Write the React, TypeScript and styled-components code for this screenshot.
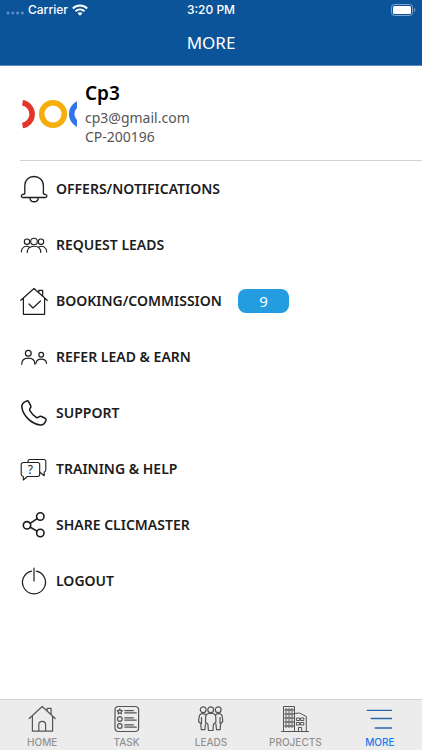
import React from "react";
import styled, { createGlobalStyle } from "styled-components";

const GlobalStyle = createGlobalStyle`
  *, *::before, *::after { box-sizing: border-box; }
  body {
    margin: 0;
    background: #fff;
    color: #1c1c1c;
    font-family: "Noto Sans", "Open Sans", sans-serif;
  }
`;

const Screen = styled.div`
  display: flex;
  flex-direction: column;
  min-height: 100vh;
`;

const Header = styled.header`
  background: #0c5499;
  color: #fff;
  border-bottom: 1px solid #5b8dbd;
`;

const StatusBar = styled.div`
  display: grid;
  grid-template-columns: 1fr auto 1fr;
  align-items: center;
  height: 20px;
  padding: 0 6px;
  font: 500 12px/20px Inter, sans-serif;
`;

const Carrier = styled.div`
  display: flex;
  align-items: center;
  gap: 4px;
`;

const Battery = styled.div`
  display: flex;
  justify-content: flex-end;
`;

const Title = styled.h1`
  margin: 0;
  font-size: 17px;
  font-weight: 400;
  line-height: 45px;
  text-align: center;
`;

const Main = styled.main`
  flex: 1;
  padding-left: 20px;
`;

const Profile = styled.section`
  display: flex;
  align-items: center;
  gap: 8px;
  height: 95px;
  padding-left: 1px;
  border-bottom: 1px solid #d2d2d2;
`;

const ProfileText = styled.div`
  display: flex;
  flex-direction: column;
  color: #555;
  font-size: 14px;
  line-height: 19px;
`;

const Name = styled.h2`
  margin: 0 0 2px;
  color: #000;
  font-size: 19px;
  font-weight: 600;
  line-height: 26px;
`;

const Menu = styled.ul`
  margin: 0;
  padding: 0;
  list-style: none;
`;

const MenuButton = styled.button`
  display: flex;
  align-items: center;
  gap: 8px;
  width: 100%;
  height: 56px;
  padding: 0;
  border: 0;
  background: none;
  color: inherit;
  font: 600 14px/20px "Noto Sans", "Open Sans", sans-serif;
  text-align: left;
  cursor: pointer;
`;

const Badge = styled.span`
  width: 51px;
  margin-left: 8px;
  border-radius: 8px;
  background: #239de0;
  color: #fff;
  font-size: 15px;
  font-weight: 400;
  line-height: 24px;
  text-align: center;
`;

const Icon = styled.svg<{ $weight?: number }>`
  display: block;
  flex: none;
  fill: none;
  stroke: currentColor;
  stroke-width: ${(p) => p.$weight ?? 1};
  stroke-linecap: round;
  stroke-linejoin: round;
`;

const Mark = styled.text`
  fill: currentColor;
  stroke: none;
  font: 400 12px "Noto Sans", sans-serif;
  text-anchor: middle;
`;

const TabBar = styled.nav`
  display: grid;
  grid-template-columns: repeat(5, 1fr);
  height: 51px;
  border-top: 1px solid #d3d3d3;
  background: #ececec;
`;

const Tab = styled.a<{ $active?: boolean }>`
  display: flex;
  flex-direction: column;
  align-items: center;
  gap: 2px;
  padding-top: 5px;
  color: ${(p) => (p.$active ? "#1a7af0" : "#929292")};
  font: 500 10px/14px Inter, sans-serif;
  text-decoration: none;

  svg {
    color: ${(p) => (p.$active ? "#2767a8" : "#555")};
  }
`;

type GlyphProps = { weight?: number; children: React.ReactNode };

const Glyph = ({ weight, children }: GlyphProps) => (
  <Icon $weight={weight} width="28" height="28" viewBox="0 0 28 28" aria-hidden="true">
    {children}
  </Icon>
);

const items = [
  {
    label: "OFFERS/NOTIFICATIONS",
    icon: (
      <Glyph weight={1.3}>
        <path d="M4.8 18.8V10.8C4.8 5 8.8 1.5 14 1.5s9.4 3.5 9.4 9.3v8l2.4.8c1.6.6 1.4 2.9-.4 2.9H2.8C1 22.5.8 20.2 2.4 19.6Z" />
        <path d="M10 22.7c0 5.4 8.2 5.4 8.2 0" />
      </Glyph>
    ),
  },
  {
    label: "REQUEST LEADS",
    icon: (
      <Glyph weight={1.1}>
        <circle cx="14" cy="10.500" r="3.300" />
        <circle cx="7" cy="10.700" r="2.700" />
        <circle cx="21" cy="10.700" r="2.700" />
        <path d="M7.2 21.5C7.2 17.5 10 15.2 14 15.2s6.800 2.300 6.800 6.300M1.300 21c0-4.500 3.700-6.900 8-5M26.700 21c0-4.500-3.700-6.900-8-5" />
      </Glyph>
    ),
  },
  {
    label: "BOOKING/COMMISSION",
    badge: "9",
    icon: (
      <Glyph weight={1.2}>
        <path d="M.8 13.300 14 1.500l13.200 11.800M3.400 11v16.300h21.200V11M18.800 5.500V3.300h3.900v5.700M9 17l4 4 7.500-7" />
      </Glyph>
    ),
  },
  {
    label: "REFER LEAD & EARN",
    icon: (
      <Glyph weight={1.2}>
        <circle cx="8.300" cy="10.300" r="2.900" />
        <circle cx="21.200" cy="11.800" r="2.400" />
        <path d="M1.700 21.300c0-4 2.600-6.100 6.600-6.100s6.600 2.100 6.600 6.100M16 20.300c.2-2.700 2.100-4.200 5.200-4.200s5.200 1.500 5.300 4.200" />
      </Glyph>
    ),
  },
  {
    label: "SUPPORT",
    icon: (
      <Glyph weight={1.6}>
        <path d="M6.300 2.100C4 3.200 1.600 4.600 1.800 7.500 2.500 16 11 25 20.500 26c2.500.2 4.500-2 5.500-4.500.3-1 0-1.600-.9-2.200l-3.600-1.800c-1-.5-1.700-.4-2.500.3-1 1-1.700 1.200-2.700.5-2.800-1.800-5.300-4.500-6.500-6.800-.5-1-.3-1.700.5-2.500.7-.7.8-1.400.4-2.300L8.500 2.700c-.5-.9-1.400-1-2.200-.6Z" />
      </Glyph>
    ),
  },
  {
    label: "TRAINING & HELP",
    icon: (
      <Glyph weight={1.1}>
        <path d="M3.500 7.500h14c1.300 0 2.200.8 2.200 2v9.800c0 1.300-.9 2.200-2.200 2.200H7.300l-4 3.500v-3.500C2 21.300 1.200 20.500 1.200 19.300V9.800c0-1.400.9-2.300 2.300-2.300Z" />
        <path d="M8 7.300V6.200c0-1 .8-1.700 1.800-1.700h14c1.300 0 2 .8 2 2v8.300c0 1.300-.6 2-1.600 2.200v3.700l-4.300-3.500" />
        <Mark x="10.400" y="19">?</Mark>
      </Glyph>
    ),
  },
  {
    label: "SHARE CLICMASTER",
    icon: (
      <Glyph weight={1.6}>
        <circle cx="7" cy="14.300" r="3.700" />
        <circle cx="20.300" cy="5.500" r="3.700" />
        <circle cx="20.300" cy="22" r="3.700" />
        <path d="m10.200 12.300 7-4.700M10.300 16.200l6.800 3.900" />
      </Glyph>
    ),
  },
  {
    label: "LOGOUT",
    icon: (
      <Glyph weight={1.2}>
        <path d="M11.500 4.100a11.500 11.500 0 1 0 5 0M14 1.200V14" />
      </Glyph>
    ),
  },
];

const towerWindows = [4, 8, 12, 16, 20].flatMap((y) => [4.5, 7.5, 10.5].map((x) => [x, y]));
const annexWindows = [13, 17.5].flatMap((y) => [15.8, 20].map((x) => [x, y]));

const tabs = [
  {
    label: "HOME",
    icon: (
      <Glyph weight={1.2}>
        <path d="M1.200 13.500 14.200 1.500l13 12M4.400 11v15.200h20.200V11M19.200 5.500V3.300h3.900V9M10.800 26v-6.200c0-4.500 6.800-4.500 6.800 0V26" />
      </Glyph>
    ),
  },
  {
    label: "TASK",
    icon: (
      <Glyph weight={1.2}>
        <rect x="2" y="1.500" width="23.600" height="25" rx="3.500" />
        <path d="m6.800 3.900.8 1.600 1.800.2-1.300 1.300.3 1.800-1.600-.9-1.600.9.300-1.800-1.300-1.300 1.800-.2Z" />
        <circle cx="6.800" cy="14" r="2.300" />
        <circle cx="6.800" cy="21" r="2.300" />
        <path d="M11.800 5.600h8.500M11.800 7.800h11.500M11.800 12.900h8.500M11.800 15.100h11.500M11.800 19.900h8.500M11.800 22.100h11.500" />
      </Glyph>
    ),
  },
  {
    label: "LEADS",
    icon: (
      <Glyph weight={1.2}>
        <circle cx="6.200" cy="4.700" r="2.900" />
        <circle cx="13.700" cy="4.700" r="2.900" />
        <circle cx="21.200" cy="4.700" r="2.900" />
        <path d="M11.500 8.500c-2 .3-2.800 1.600-2.900 3.500l-.1 5.200 2.400 2 .5 6.300h4.600l.5-6.300 2.400-2-.1-5.200c-.1-1.900-.9-3.200-2.900-3.500ZM8.300 9.500c-1-.9-4-1.300-5.300.2-.8 1-1.200 3.500-1.300 7.100l2 1.700.6 6.200h3.600l.6-5.700M19.100 9.500c1-.9 4-1.300 5.300.2.800 1 1.200 3.500 1.300 7.100l-2 1.700-.6 6.200h-3.600l-.6-5.700M4.500 12.500v6M23 12.500v6" />
      </Glyph>
    ),
  },
  {
    label: "PROJECTS",
    icon: (
      <Glyph>
        <path d="M.5 26.500h27M2.500 26.500v-25h11v25M13.500 8.500l5-.5 6.800 3.500v15M17.500 26.500v-4h3.200v4" />
        {towerWindows.map(([x, y]) => (
          <rect key={`${x}-${y}`} x={x} y={y} width="1.600" height="2" />
        ))}
        {annexWindows.map(([x, y]) => (
          <rect key={`${x}-${y}`} x={x} y={y} width="2.800" height="2.500" />
        ))}
      </Glyph>
    ),
  },
  {
    label: "MORE",
    active: true,
    icon: (
      <Glyph weight={1.3}>
        <path d="M1.200 5.400h24.300M5.200 13.500h20.300M9.200 23h16.300" />
      </Glyph>
    ),
  },
];

export default function App() {
  return (
    <Screen>
      <GlobalStyle />
      <Header>
        <StatusBar>
          <Carrier>
            <svg width="18" height="12" viewBox="0 0 18 12" fill="#5f8fc0" aria-hidden="true">
              <circle cx="2" cy="9" r="1.500" />
              <circle cx="6.800" cy="9" r="1.500" />
              <circle cx="11.600" cy="9" r="1.500" />
              <circle cx="16.400" cy="9" r="1.500" />
            </svg>
            <span>Carrier</span>
            <svg width="16" height="12" viewBox="0 0 16 12" fill="none" stroke="#fff" strokeWidth="2" aria-label="Wi-Fi">
              <path d="M.8 4.500c4.100-4 10.300-4 14.400 0M3.500 7.300c2.600-2.500 6.400-2.500 9 0" />
              <path d="M5.600 9.300c1.400-1.300 3.400-1.300 4.800 0L8 11.700Z" fill="#fff" stroke="none" />
            </svg>
          </Carrier>
          <span>3:20 PM</span>
          <Battery>
            <svg width="25" height="12" viewBox="0 0 25 12" aria-label="Battery full">
              <rect x=".5" y=".5" width="21" height="11" rx="3" fill="none" stroke="#7fa5cc" />
              <rect x="2" y="2" width="18" height="8" rx="1.500" fill="#fff" />
              <path d="M23 4c1.800.6 1.800 3.400 0 4Z" fill="#7fa5cc" />
            </svg>
          </Battery>
        </StatusBar>
        <Title>MORE</Title>
      </Header>
      <Main>
        <Profile>
          <svg width="56" height="56" viewBox="0 0 56 56" fill="none" strokeWidth="5.500" aria-label="Profile picture">
            <path d="M1.500 17.800a11.500 11.500 0 0 1 0 22.700" stroke="#e5352b" />
            <circle cx="32" cy="29" r="11.300" stroke="#f6ae0b" />
            <circle cx="62" cy="29" r="11.300" stroke="#3275ea" />
          </svg>
          <ProfileText>
            <Name>Cp3</Name>
            <span>cp3@gmail.com</span>
            <span>CP-200196</span>
          </ProfileText>
        </Profile>
        <Menu>
          {items.map((item) => (
            <li key={item.label}>
              <MenuButton type="button">
                {item.icon}
                <span>{item.label}</span>
                {item.badge && <Badge>{item.badge}</Badge>}
              </MenuButton>
            </li>
          ))}
        </Menu>
      </Main>
      <TabBar>
        {tabs.map((tab) => (
          <Tab
            key={tab.label}
            href={`#${tab.label.toLowerCase()}`}
            $active={tab.active}
            aria-current={tab.active ? "page" : undefined}
          >
            {tab.icon}
            <span>{tab.label}</span>
          </Tab>
        ))}
      </TabBar>
    </Screen>
  );
}
